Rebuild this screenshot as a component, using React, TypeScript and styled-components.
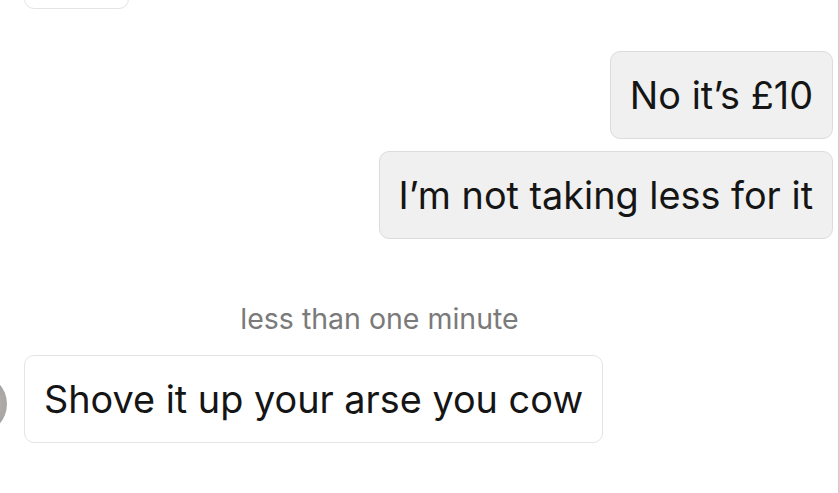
import React from "react";
import styled, { createGlobalStyle } from "styled-components";

const Global = createGlobalStyle`
  html, body { margin: 0; padding: 0; background: #ffffff; }
  body { width: 839px; height: 493px; overflow: hidden; }
`;

const Screen = styled.div`
  box-sizing: border-box;
  width: 839px;
  height: 493px;
  overflow: hidden;
  background: #ffffff;
  border-right: 1px solid #cfcfcf;
  display: flex;
  flex-direction: column;
  padding: 0 5px 0 24px;
  font-family: Inter, "Noto Sans", sans-serif;
  color: #151515;
`;

const Bubble = styled.div<{ $mine?: boolean }>`
  box-sizing: border-box;
  height: 88px;
  padding: 0 19px;
  display: flex;
  align-items: center;
  font-size: 37.8px;
  white-space: nowrap;
  border-radius: 10px;
  background: ${(p) => (p.$mine ? "#f0f0f0" : "#ffffff")};
  border: 1px solid ${(p) => (p.$mine ? "#dcdcdc" : "#e4e4e4")};
`;

const TopBubble = styled(Bubble)`
  align-self: flex-start;
  width: 105px;
  margin-top: -79px;
`;

const Mine = styled(Bubble)`
  align-self: flex-end;
`;

const Stack = styled.div<{ $gap: number; $top: number }>`
  display: flex;
  flex-direction: column;
  gap: ${(p) => p.$gap}px;
  margin-top: ${(p) => p.$top}px;
`;

const Stamp = styled.div`
  margin: 62px 98px 0 0;
  text-align: center;
  font-size: 28.5px;
  line-height: 36px;
  color: #7a7a7a;
`;

const ReceivedRow = styled.div`
  display: flex;
  align-items: center;
  gap: 17px;
  margin: 18px 0 0 -77px;
`;

const Avatar = styled.div`
  flex: none;
  width: 60px;
  height: 60px;
  border-radius: 50%;
  margin-top: 9px;
  background: radial-gradient(circle at 75% 50%, #b5b1b1, #8f8b8b);
`;

export default function App() {
  return (
    <>
      <Global />
      <Screen>
        <TopBubble />
        <Stack $gap={12} $top={42}>
          <Mine $mine>No it’s £10</Mine>
          <Mine $mine>I’m not taking less for it</Mine>
        </Stack>
        <Stamp>less than one minute</Stamp>
        <ReceivedRow>
          <Avatar />
          <Bubble>Shove it up your arse you cow</Bubble>
        </ReceivedRow>
      </Screen>
    </>
  );
}
